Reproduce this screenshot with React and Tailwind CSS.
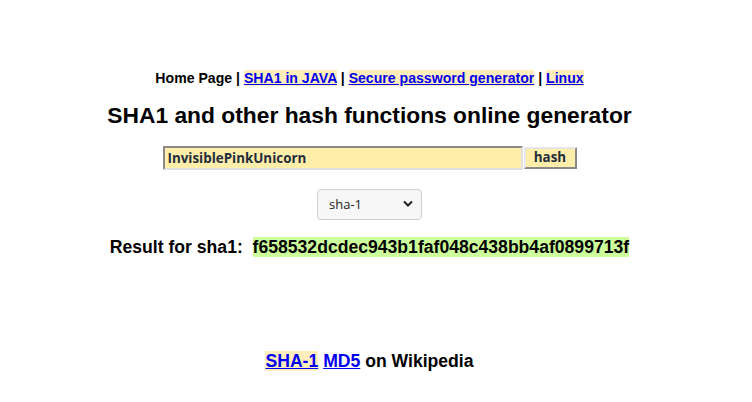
import React, { useState } from 'react'

const App = () => {
  const [text, setText] = useState('InvisiblePinkUnicorn')
  const [algo, setAlgo] = useState('sha-1')

  return (
    <div className="min-h-screen bg-white text-black text-center pr-[13px] font-['Liberation_Sans',Arial,sans-serif]">
      <div className="pt-[69px] text-[14.1px] font-bold leading-[18px]">
        Home Page |{' '}
        <a href="#" className="text-[#0000ee] underline bg-[#ffeebb]">SHA1 in JAVA</a> |{' '}
        <a href="#" className="text-[#0000ee] underline bg-[#ffeebb]">Secure password generator</a> |{' '}
        <a href="#" className="text-[#0000ee] underline bg-[#ffeebb]">Linux</a>
      </div>

      <h1 className="mt-[15px] text-[22.8px] font-bold leading-[26px]">
        SHA1 and other hash functions online generator
      </h1>

      <div className="mt-[18px] flex justify-center items-center">
        <input
          value={text}
          onChange={(e) => setText(e.target.value)}
          className="w-[360px] h-[24px] px-[3px] bg-[#ffeeaa] border-2 border-t-[#8a8a8a] border-l-[#8a8a8a] border-b-[#e0e0e0] border-r-[#e0e0e0] text-[13.4px] font-bold text-[#1f2d3a] font-['Open_Sans',sans-serif] outline-none"
        />
        <button className="ml-[1px] w-[53px] h-[22px] bg-[#ffeeaa] border-2 border-t-[#e6e6e6] border-l-[#e6e6e6] border-b-[#8a8a8a] border-r-[#8a8a8a] text-[13.4px] font-bold text-[#1f2d3a] font-['Open_Sans',sans-serif] leading-none">
          hash
        </button>
      </div>

      <div className="mt-[19px] flex justify-center">
        <div className="relative w-[105px] h-[31px]">
          <select
            value={algo}
            onChange={(e) => setAlgo(e.target.value)}
            className="appearance-none w-full h-full pl-[11px] pr-6 rounded-[4px] border border-[#cfcfcf] bg-[#f7f7f7] text-[13px] text-[#222] font-['Open_Sans',sans-serif] outline-none"
          >
            <option value="sha-1">sha-1</option>
            <option value="md5">md5</option>
            <option value="sha-256">sha-256</option>
          </select>
          <svg className="pointer-events-none absolute right-[9px] top-[11px]" width="10" height="8" viewBox="0 0 10 8">
            <path d="M1 1.5 L5 5.5 L9 1.5" fill="none" stroke="#222" strokeWidth="2" />
          </svg>
        </div>
      </div>

      <div className="mt-[17px] text-[17.6px] font-bold leading-[21px]">
        Result for sha1:&nbsp;{' '}
        <span className="bg-[#ccff99]">f658532dcdec943b1faf048c438bb4af0899713f</span>
      </div>

      <div className="mt-[92px] text-[17.6px] font-bold leading-[22px]">
        <a href="#" className="text-[#0000ee] underline bg-[#ffeebb]">SHA-1</a>{' '}
        <a href="#" className="text-[#0000ee] underline">MD5</a> on Wikipedia
      </div>
    </div>
  )
}

export default App
